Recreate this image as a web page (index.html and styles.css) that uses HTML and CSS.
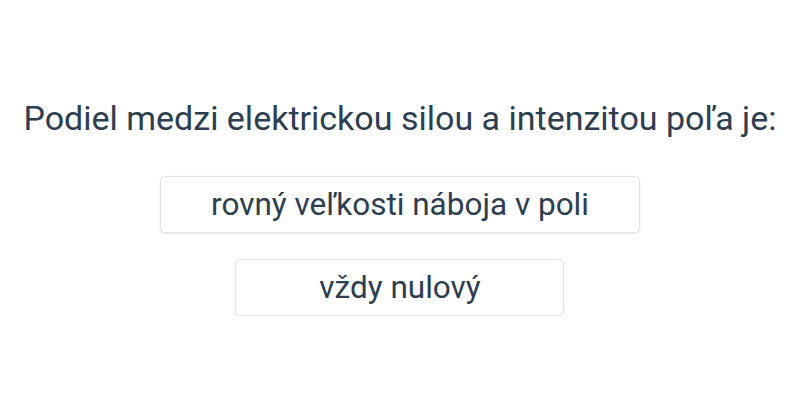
FILE: index.html
```html
<!DOCTYPE html>
<html lang="sk">
<head>
<meta charset="utf-8">
<link rel="stylesheet" href="styles.css">
</head>
<body>
<div class="quiz">
  <p class="question">Podiel medzi elektrickou silou a intenzitou poľa je:</p>
  <div class="answers">
    <button class="answer">rovný veľkosti náboja v poli</button>
    <button class="answer">vždy nulový</button>
  </div>
</div>
</body>
</html>
```
FILE: styles.css
```css
html, body {
  margin: 0;
  padding: 0;
  background: #ffffff;
}
body {
  font-family: Roboto, "Liberation Sans", sans-serif;
  color: #2c3e50;
}
.quiz {
  display: flex;
  flex-direction: column;
  align-items: center;
  padding-top: 96px;
}
.question {
  margin: 0;
  font-size: 34px;
  line-height: 44px;
  white-space: nowrap;
}
.answers {
  margin-top: 36px;
  display: flex;
  flex-direction: column;
  align-items: center;
  gap: 26px;
}
.answer {
  box-sizing: border-box;
  font-family: Roboto, "Liberation Sans", sans-serif;
  font-size: 31.5px;
  color: #2c3e50;
  background: #ffffff;
  border: 1px solid #e3e3e3;
  border-radius: 5px;
  box-shadow: 0 1px 3px rgba(0,0,0,0.08);
  padding: 0 50px;
  min-width: 329px;
  height: 57px;
}
```
